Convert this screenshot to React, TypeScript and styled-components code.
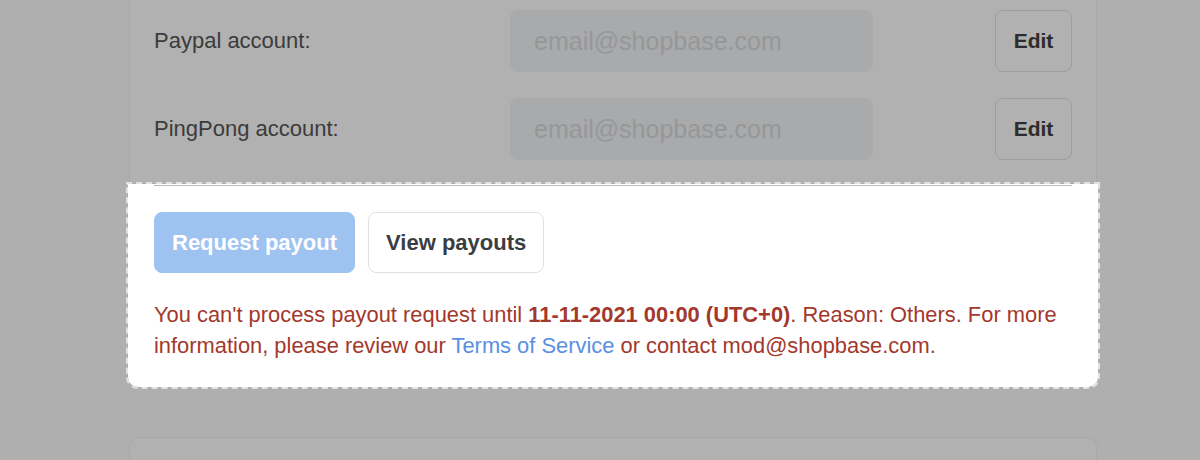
import React from "react";
import styled, { createGlobalStyle } from "styled-components";

const Global = createGlobalStyle`
  html, body { margin: 0; padding: 0; background: #afafaf; }
  body { font-family: "Liberation Sans", Arial, sans-serif; }
`;

const Page = styled.div`
  width: 968px;
  margin: -11px 0 0 129px;
  display: flex;
  flex-direction: column;
  gap: 50px;
`;

const Card = styled.div`
  background: #b1b1b1;
  border: 1px solid #a8a8a8;
  border-radius: 10px;
  padding: 20px 24px 0;
  display: flex;
  flex-direction: column;
`;

const Rows = styled.div`
  display: flex;
  flex-direction: column;
  gap: 26px;
  padding-bottom: 24px;
`;

const Row = styled.div`
  display: flex;
  align-items: center;
  height: 62px;
`;

const Label = styled.div`
  width: 356px;
  font-size: 22px;
  color: #3b3b3b;
`;

const Input = styled.div`
  width: 363px;
  height: 62px;
  box-sizing: border-box;
  padding: 0 24px;
  display: flex;
  align-items: center;
  background: #a9aaab;
  border-radius: 8px;
  font-size: 25px;
  color: #969798;
`;

const EditButton = styled.div`
  margin-left: auto;
  width: 77px;
  height: 62px;
  box-sizing: border-box;
  border: 1px solid #9d9d9d;
  border-radius: 8px;
  display: flex;
  align-items: center;
  justify-content: center;
  font-weight: 700;
  font-size: 21px;
  color: #2c2c2c;
`;

const Highlight = styled.div`
  margin: 0 -26px -1px;
  padding: 0 26px 26px;
  background: #ffffff;
  border-radius: 0 0 10px 10px;
  outline: 2px dashed #e2e2e2;
  outline-offset: 0;
  position: relative;
`;

const Divider = styled.div`
  height: 1px;
  background: #b9b9b9;
  margin-top: 1px;
`;

const Actions = styled.div`
  display: flex;
  gap: 13px;
  margin-top: 26px;
`;

const Button = styled.div<{ $primary?: boolean }>`
  height: 61px;
  box-sizing: border-box;
  padding: 0 17px;
  display: flex;
  align-items: center;
  border-radius: 8px;
  font-size: 22px;
  font-weight: 700;
  background: ${(p) => (p.$primary ? "#9ec3f1" : "#ffffff")};
  color: ${(p) => (p.$primary ? "#ffffff" : "#3a3d42")};
  border: 1px solid ${(p) => (p.$primary ? "#9ec3f1" : "#dfe1e4")};
`;

const Notice = styled.p`
  margin: 26px 0 0;
  font-size: 21.88px;
  line-height: 31px;
  color: #a3382c;
`;

const Link = styled.a`
  color: #5b8fe4;
  text-decoration: none;
`;

const NextCard = styled.div`
  height: 40px;
  background: #b1b1b1;
  border: 1px solid #a8a8a8;
  border-bottom: none;
  border-radius: 10px 10px 0 0;
`;

export default function App() {
  return (
    <>
      <Global />
      <Page>
        <Card>
          <Rows>
            <Row>
              <Label>Paypal account:</Label>
              <Input>email@shopbase.com</Input>
              <EditButton>Edit</EditButton>
            </Row>
            <Row>
              <Label>PingPong account:</Label>
              <Input>email@shopbase.com</Input>
              <EditButton>Edit</EditButton>
            </Row>
          </Rows>
          <Highlight>
            <Divider />
            <Actions>
              <Button $primary>Request payout</Button>
              <Button>View payouts</Button>
            </Actions>
            <Notice>
              You can't process payout request until <b>11-11-2021 00:00 (UTC+0)</b>. Reason: Others. For more
              information, please review our <Link href="#">Terms of Service</Link> or contact mod@shopbase.com.
            </Notice>
          </Highlight>
        </Card>
        <NextCard />
      </Page>
    </>
  );
}
